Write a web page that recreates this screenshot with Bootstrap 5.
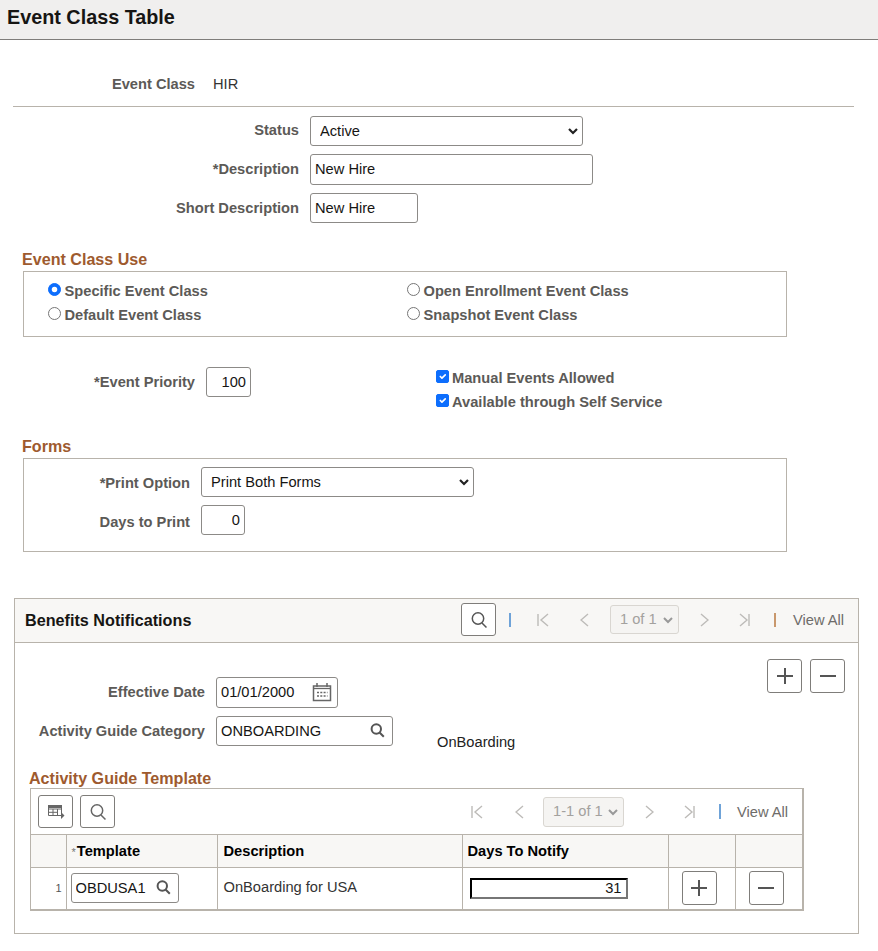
<!DOCTYPE html>
<html lang="en">
<head>
<meta charset="utf-8">
<title>Event Class Table</title>
<link rel="stylesheet" href="https://cdn.jsdelivr.net/npm/bootstrap@5.3.0/dist/css/bootstrap.min.css">
<style>
html,body{height:951px;overflow:hidden}
body{font-family:"Liberation Sans",Arial,sans-serif;font-size:14.67px;color:#222;background:#fff}
.pg-head{height:40px;background:#f0efee;border-bottom:1px solid #7f7d7a;padding:6px 7px 0}
.pg-head h1{font-size:19.8px;font-weight:700;line-height:22px;margin:0;color:#161513}
.fld-row{display:flex;align-items:center}
.fld-lbl{font-weight:700;color:#5c5a57;text-align:right;line-height:16px;margin:0;flex:none}
.w-299{width:299px;margin-right:11px}
.w-195{width:195px;margin-right:11px}
.w-166{width:166px;margin-right:11px}
.w-190{width:190px;margin-right:11px}
.ev-row{margin-top:36px;height:16px}
.ev-row .fld-lbl{margin-right:18px}
.ev-val{color:#333;line-height:16px}
.top-rule{margin:14px 0 0 13px;border-color:#b8b3ab;opacity:1;width:841px}
.row-status{margin-top:9px}
.row-status .fld-lbl{margin-top:-2px}
.row-next{margin-top:8px}
.lbl-up{margin-top:-1px}
.ctl{height:30px;flex:none}
.ctl.form-control{border:1px solid #8c8a87;border-radius:3px;padding:0 4px;font-size:14.67px;line-height:28px;min-height:0;color:#161513;box-shadow:none}
.ctl.form-select{border:1px solid #8c8a87;border-radius:3px;font-size:14.67px;padding:0 24px 0 9px;color:#161513;line-height:28px;box-shadow:none;background-size:12px 10px;background-position:right 3px center;background-image:url("data:image/svg+xml,%3csvg xmlns='http://www.w3.org/2000/svg' viewBox='0 0 12 10'%3e%3cpath fill='none' stroke='%23222' stroke-width='2.2' d='M2 3l4 4 4-4'/%3e%3c/svg%3e")}
.ctl.form-control.tall-in{height:31px;padding-bottom:2px}
.w-273{width:273px}
.w-283{width:283px}
.w-108{width:108px}
.w-45{width:45px}
.w-44{width:44px}
.ctl.form-control.num-r{text-align:right}
.sec-title{font-size:16.1px;font-weight:700;color:#9e5a2e;line-height:18px;margin:0}
.sec-use{margin:27px 0 3px 22px}
.sec-forms{margin:27px 0 3px 22px}
.sec-guide{margin:0 0 1px 14px}
.grp-box{border:1px solid #b8b3ab;width:764px;margin-left:23px}
.opt{display:flex;align-items:center;font-weight:700;color:#5c5a57;line-height:16px;margin:0}
.opt .form-check-input{width:13px;height:13px;margin:0 3.5px 4px 0;flex:none;border-color:#767676;float:none}
.opt .form-check-input:checked{background-color:#0d6efd;border-color:#0d6efd}
.opt .form-check-input[type=checkbox]{border-radius:2px;margin-right:3px}
.use-grid{display:grid;grid-template-columns:359px 1fr;grid-auto-rows:16px;row-gap:8px;padding:11px 0 0 24px;height:64px;align-content:start}
.prio-wrap{margin-top:30px}
.chk-col{display:flex;flex-direction:column;gap:8px;margin-left:185px;margin-top:3px}
.chk-col .opt{height:16px}
.forms-box{height:94px;padding-top:8px}
.lbl-print{margin-top:2px}
.lbl-days{margin-top:4px}
.panel{width:845px;height:336px;margin:46px 0 0 14px;border:1px solid #b8b3ab}
.panel-head{height:44px;background:#f8f7f5;border-bottom:1px solid #b8b3ab;display:flex;align-items:center;padding:0 0 2px 10px}
.panel-head h2{font-size:16.2px;font-weight:700;line-height:20px;margin:0;color:#161513;width:436px}
.tool-btn{width:35px;height:33px;border:1px solid #7f7d7a;border-radius:3px;background:#fff;padding:0;display:inline-flex;align-items:center;justify-content:center;flex:none;--bs-btn-padding-x:0;--bs-btn-padding-y:0}
.tool-btn:hover{background:#fff;border-color:#7f7d7a}
.tool-btn.tall{height:34px}
.pg-sel.form-select{height:29px;padding:0 0 0 9px;font-size:14.67px;color:#a3a19e;background-color:#f5f4f2;border:1px solid #d9d6d1;border-radius:3px;line-height:27px;opacity:1;min-height:0;flex:none;background-size:12px 10px;background-position:right 4px center;background-image:url("data:image/svg+xml,%3csvg xmlns='http://www.w3.org/2000/svg' viewBox='0 0 12 10'%3e%3cpath fill='none' stroke='%23999' stroke-width='2' d='M2 3l4 4 4-4'/%3e%3c/svg%3e")}
.sel-a{width:69px;margin-left:21px}
.pg-sel.form-select.sel-b{width:81px;height:30px;margin-left:19px}
.view-all{color:#6e6c69;font-size:14.67px;line-height:16px;text-decoration:none}
.sep{width:2px;height:14px;flex:none}
.sep-b{background:#6fa3d8}
.sep-o{background:#c9986c}
.pico{flex:none;display:block}
.h-m13{margin-left:13px}.h-m26{margin-left:26px}.h-m31{margin-left:31px}.h-m21{margin-left:21px}.h-m30{margin-left:30px}.h-m24{margin-left:24px}.h-m17{margin-left:17px}
.g-m7{margin-left:7px}.g-m356{margin-left:356px}.g-m32{margin-left:32px}.g-m16{margin-left:16px}
.sep.tall-sep{height:15px}
.pbody{height:126px;padding-top:16px}
.pfields{margin-top:18px}
.date-lbl{margin-top:-2px}
.ctl-wrap{position:relative;flex:none}
.ctl-wrap .form-control{width:100%}
.wrap-date{width:122px}
.wrap-cat{width:177px}
.wrap-tpl{width:108px}
.in-ico{position:absolute;top:7px;right:8px}
.in-ico.cal{right:6px;top:5px}
.desc-out{height:30px;padding-top:18px;margin-left:44px;line-height:16px;color:#222;box-sizing:border-box}
.pbtns{gap:8px;margin-right:13px}
.guide-grid{width:774px;margin-left:15px;border:1px solid #b8b3ab;border-bottom:2px solid #b8b3ab;border-right:2px solid #b8b3ab}
.grid-tools{height:45px;display:flex;align-items:center;padding-left:7px}
.guide-grid .table{margin:0;table-layout:fixed;--bs-table-border-color:#b8b3ab;--bs-table-color:#222;--bs-table-bg:transparent;border-color:#b8b3ab}
.guide-grid .table>*>tr>*{padding:0;border-width:1px 1px 0 0;border-style:solid;border-color:#b8b3ab;vertical-align:middle;font-size:14.67px}
.guide-grid .table>*>tr>*:last-child{border-right:0}
.guide-grid .table>thead>tr>th{height:33px;background:#f8f7f5;font-weight:700;color:#000;padding-left:5px}
.guide-grid .table>thead>tr>th.th-desc{padding-left:6px}
.guide-grid tbody td{height:41px}
.c-no{width:35px}.c-tpl{width:151px}.c-desc{width:245px}.c-days{width:206px}.c-add{width:67px}
.req{font-size:11px;color:#777;font-weight:400;margin:0 1px 0 0}
.guide-grid .table>tbody>tr>td.row-no{font-size:11px;color:#555;text-align:right;padding-right:4px}
.guide-grid .table>tbody>tr>td.cell-tpl{padding-left:4px}
.guide-grid .table>tbody>tr>td.cell-desc{padding:0 0 2px 6px;color:#333}
.guide-grid .table>tbody>tr>td.cell-btn{padding-left:13px}
.ctl.form-control.tpl-in{padding-left:4px}
.days-in{display:block;width:158px;height:21px;border-width:2px;border-style:inset;border-color:#222 #767676 #767676 #222;border-radius:0;text-align:right;padding:0 4px;margin-left:7px;font-size:14.67px;line-height:17px;color:#161513;outline:0;background:#fff}
</style>
</head>
<body>
<header class="pg-head"><h1>Event Class Table</h1></header>

<div class="fld-row ev-row">
  <span class="fld-lbl w-195">Event Class</span><span class="ev-val">HIR</span>
</div>
<hr class="top-rule">

<div class="fld-row row-status">
  <label class="fld-lbl w-299">Status</label>
  <select class="form-select ctl w-273"><option>Active</option></select>
</div>
<div class="fld-row row-next">
  <label class="fld-lbl w-299 lbl-up">*Description</label>
  <input class="form-control ctl tall-in w-283" value="New Hire">
</div>
<div class="fld-row row-next">
  <label class="fld-lbl w-299">Short Description</label>
  <input class="form-control ctl w-108" value="New Hire">
</div>

<h3 class="sec-title sec-use">Event Class Use</h3>
<div class="grp-box">
  <div class="use-grid">
    <label class="opt"><input class="form-check-input" type="radio" name="u" checked>Specific Event Class</label>
    <label class="opt"><input class="form-check-input" type="radio" name="u">Open Enrollment Event Class</label>
    <label class="opt"><input class="form-check-input" type="radio" name="u">Default Event Class</label>
    <label class="opt"><input class="form-check-input" type="radio" name="u">Snapshot Event Class</label>
  </div>
</div>

<div class="d-flex prio-wrap">
  <div class="fld-row align-self-start">
    <label class="fld-lbl w-195">*Event Priority</label>
    <input class="form-control ctl num-r w-45" value="100">
  </div>
  <div class="chk-col">
    <label class="opt"><input class="form-check-input" type="checkbox" checked>Manual Events Allowed</label>
    <label class="opt"><input class="form-check-input" type="checkbox" checked>Available through Self Service</label>
  </div>
</div>

<h3 class="sec-title sec-forms">Forms</h3>
<div class="grp-box forms-box">
  <div class="fld-row">
    <label class="fld-lbl w-166 lbl-print">*Print Option</label>
    <select class="form-select ctl w-273"><option>Print Both Forms</option></select>
  </div>
  <div class="fld-row row-next">
    <label class="fld-lbl w-166 lbl-days">Days to Print</label>
    <input class="form-control ctl num-r w-44" value="0">
  </div>
</div>

<section class="panel">
  <div class="panel-head">
    <h2>Benefits Notifications</h2>
    <button class="btn tool-btn" aria-label="Search"><svg class="pico" width="18" height="18" viewBox="0 0 18 18" fill="none" stroke="#555" stroke-width="1.5"><circle cx="8" cy="7.5" r="5.7"/><path d="M12 12l4.5 4.5"/></svg></button>
    <span class="sep sep-b h-m13"></span>
    <svg class="pico h-m26" width="12" height="14" viewBox="0 0 12 14" fill="none" stroke="#bdbbb8" stroke-width="1.4"><path d="M1 1v12M11 1L4 7l7 6"/></svg>
    <svg class="pico h-m31" width="9" height="14" viewBox="0 0 9 14" fill="none" stroke="#bdbbb8" stroke-width="1.4"><path d="M8 1L1 7l7 6"/></svg>
    <select class="form-select pg-sel sel-a" disabled><option>1 of 1</option></select>
    <svg class="pico h-m21" width="9" height="14" viewBox="0 0 9 14" fill="none" stroke="#bdbbb8" stroke-width="1.4"><path d="M1 1l7 6-7 6"/></svg>
    <svg class="pico h-m30" width="11" height="14" viewBox="0 0 11 14" fill="none" stroke="#bdbbb8" stroke-width="1.4"><path d="M10 1v12M1 1l7 6-7 6"/></svg>
    <span class="sep sep-o h-m24"></span>
    <a class="view-all h-m17" href="#">View All</a>
  </div>
  <div class="d-flex pbody">
    <div class="pfields">
      <div class="fld-row">
        <label class="fld-lbl w-190 date-lbl">Effective Date</label>
        <div class="ctl-wrap wrap-date">
          <input class="form-control ctl tall-in" value="01/01/2000">
          <svg class="in-ico cal" width="20" height="20" viewBox="0 0 20 20" fill="none" stroke="#666"><path stroke-width="1.5" d="M1.500 4h17v14.500h-17zM5 1v4M15 1v4"/><path stroke-width="1.3" d="M1.500 6.500h17"/><path stroke-width="1.600" stroke-dasharray="2 1.300" d="M5 10.500h10.500M5 14h10.500"/></svg>
        </div>
      </div>
      <div class="fld-row row-next">
        <label class="fld-lbl w-190">Activity Guide Category</label>
        <div class="ctl-wrap wrap-cat">
          <input class="form-control ctl" value="ONBOARDING">
          <svg class="in-ico" width="15" height="15" viewBox="0 0 15 15" fill="none" stroke="#555" stroke-width="2"><circle cx="6.300" cy="6" r="4.700"/><path d="M9.500 9.500l4.300 4.300"/></svg>
        </div>
        <span class="desc-out">OnBoarding</span>
      </div>
    </div>
    <div class="d-flex ms-auto align-items-start pbtns">
      <button class="btn tool-btn tall" aria-label="Add"><svg class="pico" width="18" height="18" viewBox="0 0 18 18" stroke="#555" stroke-width="2"><path d="M9 1v16M1 9h16"/></svg></button>
      <button class="btn tool-btn tall" aria-label="Delete"><svg class="pico" width="18" height="18" viewBox="0 0 18 18" stroke="#555" stroke-width="2"><path d="M1 9h16"/></svg></button>
    </div>
  </div>
  <h3 class="sec-title sec-guide">Activity Guide Template</h3>
  <div class="guide-grid">
    <div class="grid-tools">
      <button class="btn tool-btn" aria-label="Personalize"><svg class="pico" width="18" height="16" viewBox="0 0 18 16" fill="none" stroke="#666"><path d="M1.500 1.500h13v10h-13zM1.500 5h13M1.500 8.300h9M6 5v6.500M10.500 5v6.500"/><path fill="#666" stroke="none" d="M1 1h14v3H1zM14 8l3.500 3.500L14 15z"/></svg></button>
      <button class="btn tool-btn g-m7" aria-label="Find"><svg class="pico" width="18" height="18" viewBox="0 0 18 18" fill="none" stroke="#666" stroke-width="1.500"><circle cx="8" cy="7.500" r="5.700"/><path d="M12 12l4.500 4.500"/></svg></button>
      <svg class="pico g-m356" width="12" height="14" viewBox="0 0 12 14" fill="none" stroke="#bdbbb8" stroke-width="1.400"><path d="M1 1v12M11 1L4 7l7 6"/></svg>
      <svg class="pico g-m32" width="9" height="14" viewBox="0 0 9 14" fill="none" stroke="#bdbbb8" stroke-width="1.400"><path d="M8 1L1 7l7 6"/></svg>
      <select class="form-select pg-sel sel-b" disabled><option>1-1 of 1</option></select>
      <svg class="pico h-m21" width="9" height="14" viewBox="0 0 9 14" fill="none" stroke="#bdbbb8" stroke-width="1.400"><path d="M1 1l7 6-7 6"/></svg>
      <svg class="pico h-m30" width="11" height="14" viewBox="0 0 11 14" fill="none" stroke="#bdbbb8" stroke-width="1.400"><path d="M10 1v12M1 1l7 6-7 6"/></svg>
      <span class="sep sep-b tall-sep h-m24"></span>
      <a class="view-all g-m16" href="#">View All</a>
    </div>
    <table class="table">
      <colgroup><col class="c-no"><col class="c-tpl"><col class="c-desc"><col class="c-days"><col class="c-add"><col></colgroup>
      <thead><tr><th></th><th><span class="req">*</span>Template</th><th class="th-desc">Description</th><th>Days To Notify</th><th></th><th></th></tr></thead>
      <tbody><tr>
        <td class="row-no">1</td>
        <td class="cell-tpl"><div class="ctl-wrap wrap-tpl"><input class="form-control ctl tpl-in" value="OBDUSA1"><svg class="in-ico" width="15" height="15" viewBox="0 0 15 15" fill="none" stroke="#555" stroke-width="2"><circle cx="6.300" cy="6" r="4.700"/><path d="M9.500 9.500l4.300 4.300"/></svg></div></td>
        <td class="cell-desc">OnBoarding for USA</td>
        <td><input class="days-in" value="31"></td>
        <td class="cell-btn"><button class="btn tool-btn tall" aria-label="Add row"><svg class="pico" width="18" height="18" viewBox="0 0 18 18" stroke="#555" stroke-width="2"><path d="M9 1v16M1 9h16"/></svg></button></td>
        <td class="cell-btn"><button class="btn tool-btn tall" aria-label="Delete row"><svg class="pico" width="18" height="18" viewBox="0 0 18 18" stroke="#555" stroke-width="2"><path d="M1 9h16"/></svg></button></td>
      </tr></tbody>
    </table>
  </div>
</section>
<script src="https://cdn.jsdelivr.net/npm/bootstrap@5.3.0/dist/js/bootstrap.bundle.min.js"></script>
</body>
</html>
